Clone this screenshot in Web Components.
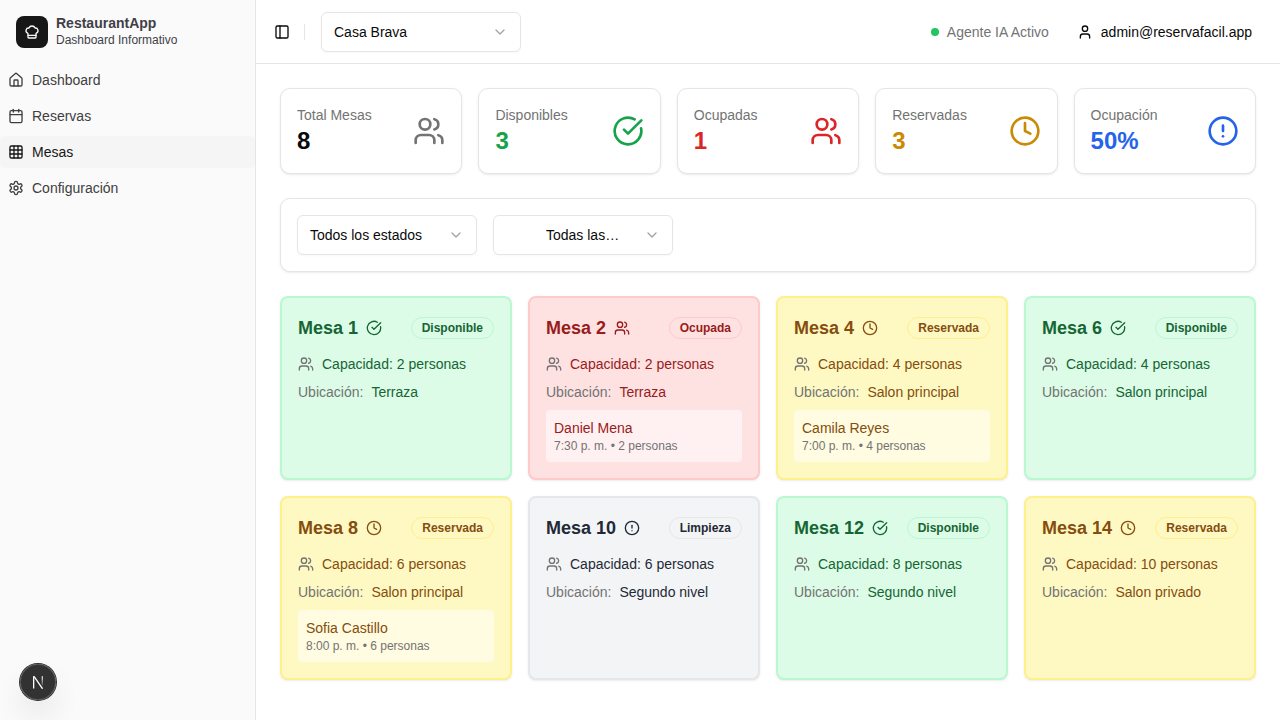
<!DOCTYPE html>
<html lang="es">
<head>
<meta charset="utf-8">
<title>RestaurantApp</title>
<style>
  html, body { margin: 0; height: 100%; }
  body {
    font-family: "Liberation Sans", Arial, sans-serif;
    font-size: 14px;
    line-height: 20px;
    color: #0a0a0a;
    background: #fff;
    overflow: hidden;
    -webkit-font-smoothing: antialiased;
  }
</style>
</head>
<body>
<app-shell>
  <side-bar slot="side">
    <nav-item icon="house" label="Dashboard"></nav-item>
    <nav-item icon="calendar" label="Reservas"></nav-item>
    <nav-item icon="table" label="Mesas" active></nav-item>
    <nav-item icon="settings" label="Configuración"></nav-item>
  </side-bar>
  <top-bar slot="top"></top-bar>

  <stat-row>
    <stat-card label="Total Mesas" value="8" icon="users" tone="#737373" value-tone="#0a0a0a"></stat-card>
    <stat-card label="Disponibles" value="3" icon="check" tone="#16a34a"></stat-card>
    <stat-card label="Ocupadas" value="1" icon="users" tone="#dc2626"></stat-card>
    <stat-card label="Reservadas" value="3" icon="clock" tone="#ca8a04"></stat-card>
    <stat-card label="Ocupación" value="50%" icon="alert" tone="#2563eb"></stat-card>
  </stat-row>

  <filter-bar>
    <select-box label="Todos los estados" width="180"></select-box>
    <select-box label="Todas las…" width="180" indent="40"></select-box>
  </filter-bar>

  <mesa-grid>
    <mesa-card nombre="Mesa 1" estado="disponible" capacidad="2" ubicacion="Terraza"></mesa-card>
    <mesa-card nombre="Mesa 2" estado="ocupada" capacidad="2" ubicacion="Terraza">
      <reserva-info cliente="Daniel Mena" detalle="7:30 p. m. • 2 personas"></reserva-info>
    </mesa-card>
    <mesa-card nombre="Mesa 4" estado="reservada" capacidad="4" ubicacion="Salon principal">
      <reserva-info cliente="Camila Reyes" detalle="7:00 p. m. • 4 personas"></reserva-info>
    </mesa-card>
    <mesa-card nombre="Mesa 6" estado="disponible" capacidad="4" ubicacion="Salon principal"></mesa-card>
    <mesa-card nombre="Mesa 8" estado="reservada" capacidad="6" ubicacion="Salon principal">
      <reserva-info cliente="Sofia Castillo" detalle="8:00 p. m. • 6 personas"></reserva-info>
    </mesa-card>
    <mesa-card nombre="Mesa 10" estado="limpieza" capacidad="6" ubicacion="Segundo nivel"></mesa-card>
    <mesa-card nombre="Mesa 12" estado="disponible" capacidad="8" ubicacion="Segundo nivel"></mesa-card>
    <mesa-card nombre="Mesa 14" estado="reservada" capacidad="10" ubicacion="Salon privado"></mesa-card>
  </mesa-grid>
</app-shell>
<dev-badge></dev-badge>

<script>
const ICONS = {
  chef: '<path d="M17 21a1 1 0 0 0 1-1v-5.35c0-.457.316-.844.727-1.041a4 4 0 0 0-2.134-7.589 5 5 0 0 0-9.186 0 4 4 0 0 0-2.134 7.588c.411.198.727.585.727 1.041V20a1 1 0 0 0 1 1Z"/><path d="M6 17h12"/>',
  house: '<path d="M15 21v-8a1 1 0 0 0-1-1h-4a1 1 0 0 0-1 1v8"/><path d="M3 10a2 2 0 0 1 .709-1.528l7-5.999a2 2 0 0 1 2.582 0l7 5.999A2 2 0 0 1 21 10v9a2 2 0 0 1-2 2H5a2 2 0 0 1-2-2z"/>',
  calendar: '<path d="M8 2v4"/><path d="M16 2v4"/><rect width="18" height="18" x="3" y="4" rx="2"/><path d="M3 10h18"/>',
  table: '<rect width="18" height="18" x="3" y="3" rx="2"/><path d="M3 9h18"/><path d="M3 15h18"/><path d="M9 3v18"/><path d="M15 3v18"/>',
  settings: '<path d="M12.22 2h-.44a2 2 0 0 0-2 2v.18a2 2 0 0 1-1 1.73l-.43.25a2 2 0 0 1-2 0l-.15-.08a2 2 0 0 0-2.73.73l-.22.38a2 2 0 0 0 .73 2.73l.15.1a2 2 0 0 1 1 1.72v.51a2 2 0 0 1-1 1.74l-.15.09a2 2 0 0 0-.73 2.73l.22.38a2 2 0 0 0 2.73.73l.15-.08a2 2 0 0 1 2 0l.43.25a2 2 0 0 1 1 1.73V20a2 2 0 0 0 2 2h.44a2 2 0 0 0 2-2v-.18a2 2 0 0 1 1-1.73l.43-.25a2 2 0 0 1 2 0l.15.08a2 2 0 0 0 2.73-.73l.22-.39a2 2 0 0 0-.73-2.73l-.15-.08a2 2 0 0 1-1-1.74v-.5a2 2 0 0 1 1-1.74l.15-.09a2 2 0 0 0 .73-2.73l-.22-.38a2 2 0 0 0-2.73-.73l-.15.08a2 2 0 0 1-2 0l-.43-.25a2 2 0 0 1-1-1.73V4a2 2 0 0 0-2-2z"/><circle cx="12" cy="12" r="3"/>',
  panel: '<rect width="18" height="18" x="3" y="3" rx="2"/><path d="M9 3v18"/>',
  chevron: '<path d="m6 9 6 6 6-6"/>',
  user: '<path d="M19 21v-2a4 4 0 0 0-4-4H9a4 4 0 0 0-4 4v2"/><circle cx="12" cy="7" r="4"/>',
  users: '<path d="M16 21v-2a4 4 0 0 0-4-4H6a4 4 0 0 0-4 4v2"/><path d="M16 3.128a4 4 0 0 1 0 7.744"/><path d="M22 21v-2a4 4 0 0 0-3-3.87"/><circle cx="9" cy="7" r="4"/>',
  check: '<path d="M21.801 10A10 10 0 1 1 17 3.335"/><path d="m9 11 3 3L22 4"/>',
  clock: '<circle cx="12" cy="12" r="10"/><polyline points="12 6 12 12 16 14"/>',
  alert: '<circle cx="12" cy="12" r="10"/><line x1="12" x2="12" y1="8" y2="12"/><line x1="12" x2="12.01" y1="16" y2="16"/>'
};

class UiIcon extends HTMLElement {
  connectedCallback() {
    const size = this.getAttribute('size') || 16;
    const root = this.shadowRoot || this.attachShadow({ mode: 'open' });
    root.innerHTML = `
      <style>
        :host { display: block; flex: none; width: ${size}px; height: ${size}px; }
        svg { display: block; }
      </style>
      <svg xmlns="http://www.w3.org/2000/svg" width="${size}" height="${size}" viewBox="0 0 24 24" fill="none"
        stroke="currentColor" stroke-width="2" stroke-linecap="round" stroke-linejoin="round">${ICONS[this.getAttribute('name')]}</svg>`;
  }
}

class AppShell extends HTMLElement {
  constructor() {
    super();
    this.attachShadow({ mode: 'open' }).innerHTML = `
      <style>
        :host { display: flex; height: 720px; width: 1280px; }
        .main { flex: 1; min-width: 0; display: flex; flex-direction: column; }
        .content { padding: 24px; display: flex; flex-direction: column; gap: 24px; }
      </style>
      <slot name="side"></slot>
      <div class="main">
        <slot name="top"></slot>
        <div class="content"><slot></slot></div>
      </div>`;
  }
}

class SideBar extends HTMLElement {
  constructor() {
    super();
    this.attachShadow({ mode: 'open' }).innerHTML = `
      <style>
        :host {
          display: block; flex: none; box-sizing: border-box; width: 256px;
          background: #fafafa; border-right: 1px solid #e5e5e5;
        }
        .brand { display: flex; align-items: center; gap: 8px; height: 32px; padding: 16px; }
        .logo {
          width: 32px; height: 32px; border-radius: 8px; background: #171717; color: #fafafa;
          display: flex; align-items: center; justify-content: center;
        }
        .txt { display: flex; flex-direction: column; gap: 1px; padding-bottom: 1px; }
        strong { font-size: 14px; line-height: 16px; font-weight: 700; color: #3f3f46; }
        small { font-size: 12px; line-height: 16px; color: #3f3f46; }
        nav { display: flex; flex-direction: column; gap: 4px; }
      </style>
      <div class="brand">
        <div class="logo"><ui-icon name="chef"></ui-icon></div>
        <div class="txt"><strong>RestaurantApp</strong><small>Dashboard Informativo</small></div>
      </div>
      <nav><slot></slot></nav>`;
  }
}

class NavItem extends HTMLElement {
  connectedCallback() {
    const active = this.hasAttribute('active');
    this.attachShadow({ mode: 'open' }).innerHTML = `
      <style>
        :host {
          display: flex; align-items: center; gap: 8px; height: 32px; padding: 0 8px;
          border-radius: 6px; color: ${active ? '#171717' : '#404040'};
          background: ${active ? '#f5f5f5' : 'transparent'};
        }
      </style>
      <ui-icon name="${this.getAttribute('icon')}"></ui-icon>
      <span>${this.getAttribute('label')}</span>`;
  }
}

class SelectBox extends HTMLElement {
  connectedCallback() {
    const indent = this.getAttribute('indent') || 0;
    this.attachShadow({ mode: 'open' }).innerHTML = `
      <style>
        :host {
          display: flex; align-items: center; justify-content: space-between; box-sizing: border-box;
          width: ${this.getAttribute('width')}px; height: 40px; padding: 0 12px;
          background: #fff; border: 1px solid #e5e5e5; border-radius: 6px;
          box-shadow: 0 1px 2px rgba(0,0,0,.03); color: #0a0a0a;
        }
        span { padding-left: ${indent}px; white-space: nowrap; }
        ui-icon { color: #a3a3a3; }
      </style>
      <span>${this.getAttribute('label')}</span>
      <ui-icon name="chevron"></ui-icon>`;
  }
}

class TopBar extends HTMLElement {
  constructor() {
    super();
    this.attachShadow({ mode: 'open' }).innerHTML = `
      <style>
        :host {
          display: flex; align-items: center; box-sizing: border-box; height: 64px; flex: none;
          padding: 0 28px 0 18px; border-bottom: 1px solid #e5e5e5; background: #fff;
        }
        .sep { width: 1px; height: 16px; background: #e5e5e5; margin: 0 16px 0 14px; }
        .right { margin-left: auto; display: flex; align-items: center; gap: 28px; }
        .status { display: flex; align-items: center; gap: 8px; color: #737373; }
        .dot { width: 8px; height: 8px; border-radius: 50%; background: #22c55e; }
        .account { display: flex; align-items: center; gap: 8px; color: #0a0a0a; }
      </style>
      <ui-icon name="panel"></ui-icon>
      <div class="sep"></div>
      <select-box label="Casa Brava" width="200"></select-box>
      <div class="right">
        <div class="status"><i class="dot"></i><span>Agente IA Activo</span></div>
        <div class="account"><ui-icon name="user"></ui-icon><span>admin@reservafacil.app</span></div>
      </div>`;
  }
}

class StatRow extends HTMLElement {
  constructor() {
    super();
    this.attachShadow({ mode: 'open' }).innerHTML = `
      <style>:host { display: grid; grid-template-columns: repeat(5, 1fr); gap: 16px; }</style>
      <slot></slot>`;
  }
}

class StatCard extends HTMLElement {
  connectedCallback() {
    const tone = this.getAttribute('tone');
    this.attachShadow({ mode: 'open' }).innerHTML = `
      <style>
        :host {
          display: flex; align-items: center; justify-content: space-between;
          padding: 16px; background: #fff; border: 1px solid #e5e5e5; border-radius: 10px;
          box-shadow: 0 1px 3px rgba(0,0,0,.07), 0 1px 2px -1px rgba(0,0,0,.07);
        }
        .label { color: #737373; }
        .value { font-size: 24px; line-height: 32px; font-weight: 700; color: ${this.getAttribute('value-tone') || tone}; }
        ui-icon { color: ${tone}; }
      </style>
      <div>
        <div class="label">${this.getAttribute('label')}</div>
        <div class="value">${this.getAttribute('value')}</div>
      </div>
      <ui-icon name="${this.getAttribute('icon')}" size="32"></ui-icon>`;
  }
}

class FilterBar extends HTMLElement {
  constructor() {
    super();
    this.attachShadow({ mode: 'open' }).innerHTML = `
      <style>
        :host {
          display: flex; gap: 16px; padding: 16px; background: #fff;
          border: 1px solid #e5e5e5; border-radius: 10px;
          box-shadow: 0 1px 3px rgba(0,0,0,.07), 0 1px 2px -1px rgba(0,0,0,.07);
        }
      </style>
      <slot></slot>`;
  }
}

class MesaGrid extends HTMLElement {
  constructor() {
    super();
    this.attachShadow({ mode: 'open' }).innerHTML = `
      <style>:host { display: grid; grid-template-columns: repeat(4, 1fr); grid-auto-rows: 184px; gap: 16px; }</style>
      <slot></slot>`;
  }
}

const ESTADOS = {
  disponible: { label: 'Disponible', icon: 'check', bg: '#dcfce7', line: '#bbf7d0', text: '#166534' },
  ocupada: { label: 'Ocupada', icon: 'users', bg: '#fee2e2', line: '#fecaca', text: '#991b1b' },
  reservada: { label: 'Reservada', icon: 'clock', bg: '#fef9c3', line: '#fef08a', text: '#854d0e' },
  limpieza: { label: 'Limpieza', icon: 'alert', bg: '#f3f4f6', line: '#e5e7eb', text: '#1f2937' }
};

class MesaCard extends HTMLElement {
  connectedCallback() {
    const e = ESTADOS[this.getAttribute('estado')];
    this.attachShadow({ mode: 'open' }).innerHTML = `
      <style>
        :host {
          display: block; box-sizing: border-box; padding: 16px; min-width: 0;
          background: ${e.bg}; border: 2px solid ${e.line}; border-radius: 8px; color: ${e.text};
          box-shadow: 0 1px 3px rgba(0,0,0,.07), 0 1px 2px -1px rgba(0,0,0,.07);
        }
        .head { display: flex; align-items: center; justify-content: space-between; height: 28px; margin-bottom: 12px; }
        .title { display: flex; align-items: center; gap: 8px; }
        h3 { margin: 0; font-size: 18px; line-height: 28px; font-weight: 700; }
        .badge {
          font-size: 12px; line-height: 16px; font-weight: 700; padding: 2px 10px;
          border: 1px solid ${e.line}; border-radius: 999px; white-space: nowrap;
        }
        .body { display: flex; flex-direction: column; gap: 8px; }
        .row { display: flex; align-items: center; height: 20px; }
        .row ui-icon { color: #737373; margin-right: 8px; }
        .muted { color: #737373; margin-right: 8px; }
      </style>
      <div class="head">
        <div class="title"><h3>${this.getAttribute('nombre')}</h3><ui-icon name="${e.icon}"></ui-icon></div>
        <span class="badge">${e.label}</span>
      </div>
      <div class="body">
        <div class="row"><ui-icon name="users"></ui-icon><span>Capacidad: ${this.getAttribute('capacidad')} personas</span></div>
        <div class="row"><span class="muted">Ubicación:</span><span>${this.getAttribute('ubicacion')}</span></div>
        <slot></slot>
      </div>`;
  }
}

class ReservaInfo extends HTMLElement {
  connectedCallback() {
    this.attachShadow({ mode: 'open' }).innerHTML = `
      <style>
        :host {
          display: block; padding: 8px; border-radius: 4px;
          background: rgba(255,255,255,.5);
        }
        .who { line-height: 20px; }
        .when { font-size: 12px; line-height: 16px; color: #737373; }
      </style>
      <div class="who">${this.getAttribute('cliente')}</div>
      <div class="when">${this.getAttribute('detalle')}</div>`;
  }
}

class DevBadge extends HTMLElement {
  constructor() {
    super();
    this.attachShadow({ mode: 'open' }).innerHTML = `
      <style>
        :host {
          position: fixed; left: 20px; bottom: 20px; width: 36px; height: 36px; border-radius: 50%;
          background: rgba(0,0,0,.8); display: flex; align-items: center; justify-content: center;
          box-shadow: 0 0 0 1px #2e2e2e, inset 0 0 0 1px rgba(255,255,255,.15), 0 16px 32px -8px rgba(0,0,0,.24);
        }
      </style>
      <svg width="16" height="16" viewBox="0 0 16 16" fill="none">
        <defs>
          <linearGradient id="fade" x1="0" y1="0" x2="0" y2="1">
            <stop offset="0" stop-color="#fff"/>
            <stop offset="1" stop-color="#fff" stop-opacity=".2"/>
          </linearGradient>
        </defs>
        <path d="M3 2.2h1.3v12.3H3z" fill="#fff"/>
        <path d="M3.2 2.2h1.5l8.5 12.2-1.3.7z" fill="#fff"/>
        <path d="M11.7 2.2h1.2v9.2h-1.2z" fill="url(#fade)"/>
      </svg>`;
  }
}

customElements.define('ui-icon', UiIcon);
customElements.define('app-shell', AppShell);
customElements.define('side-bar', SideBar);
customElements.define('nav-item', NavItem);
customElements.define('select-box', SelectBox);
customElements.define('top-bar', TopBar);
customElements.define('stat-row', StatRow);
customElements.define('stat-card', StatCard);
customElements.define('filter-bar', FilterBar);
customElements.define('mesa-grid', MesaGrid);
customElements.define('mesa-card', MesaCard);
customElements.define('reserva-info', ReservaInfo);
customElements.define('dev-badge', DevBadge);
</script>
</body>
</html>
